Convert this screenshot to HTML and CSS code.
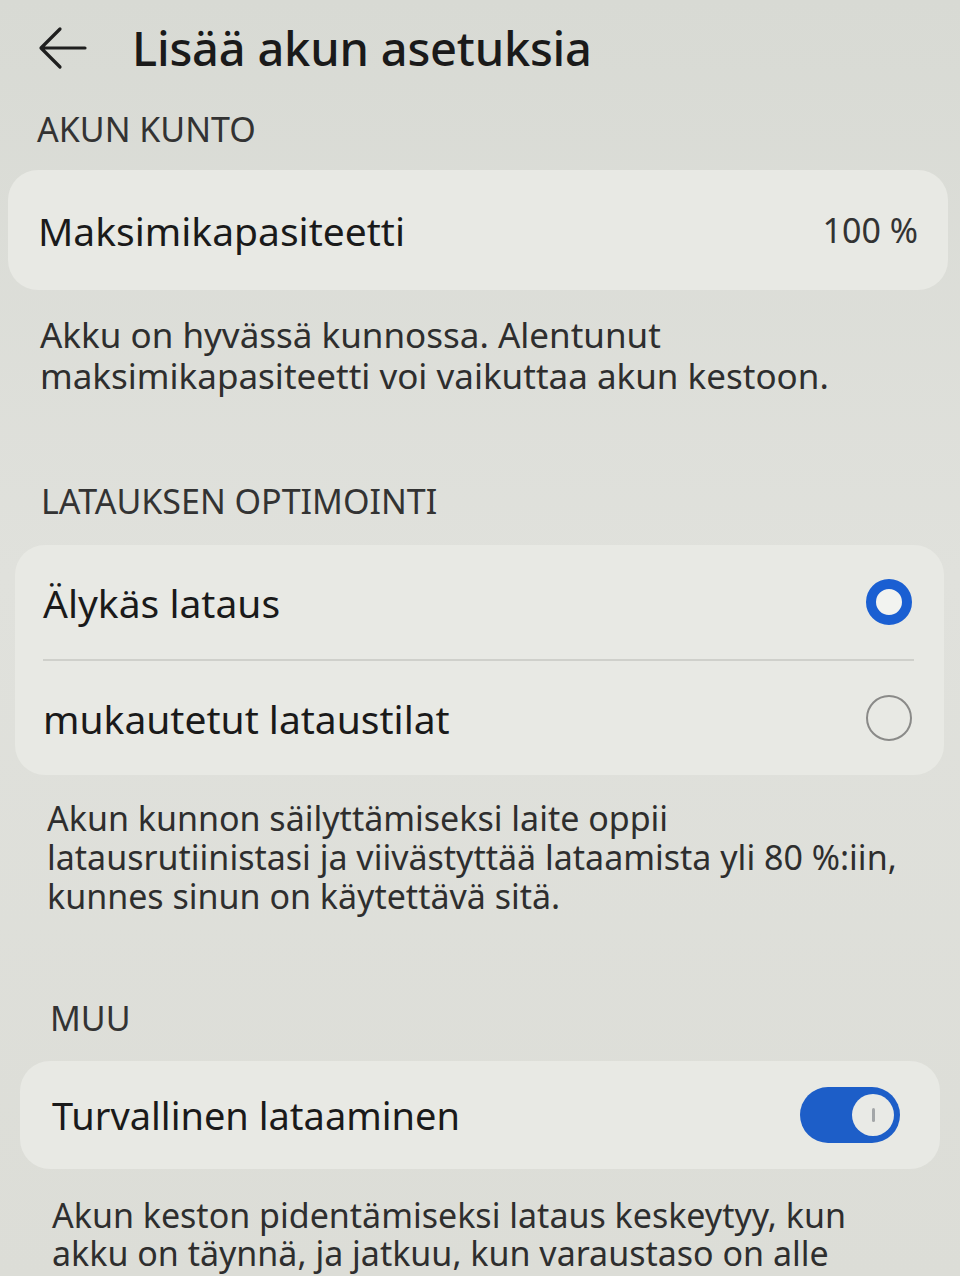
FILE: index.html
```html
<!DOCTYPE html>
<html lang="fi">
<head>
  <meta charset="UTF-8">
  <title>Lisää akun asetuksia</title>
  <link rel="stylesheet" href="styles.css">
</head>
<body>
  <div class="screen">
    <header class="topbar">
      <svg class="back" width="50" height="46" viewBox="0 0 50 46">
        <path d="M47 23 H4 M22 4 L3 23 L22 42" fill="none" stroke="#1f1f1f" stroke-width="3.2" stroke-linecap="round" stroke-linejoin="round"/>
      </svg>
      <h1>Lisää akun asetuksia</h1>
    </header>

    <!-- Akun kunto -->
    <div class="label first">AKUN KUNTO</div>
    <div class="card card-health">
      <div class="row">
        <span class="row-title">Maksimikapasiteetti</span>
        <span class="row-value">100 %</span>
      </div>
    </div>
    <p class="note note-health">Akku on hyvässä kunnossa. Alentunut<br>maksimikapasiteetti voi vaikuttaa akun kestoon.</p>

    <!-- Latauksen optimointi -->
    <div class="label second">LATAUKSEN OPTIMOINTI</div>
    <div class="card card-opt">
      <div class="row tall">
        <span class="row-title">Älykäs lataus</span>
        <span class="radio checked"></span>
      </div>
      <div class="divider"></div>
      <div class="row tall">
        <span class="row-title">mukautetut lataustilat</span>
        <span class="radio"></span>
      </div>
    </div>
    <p class="note note-opt">Akun kunnon säilyttämiseksi laite oppii<br>latausrutiinistasi ja viivästyttää lataamista yli 80 %:iin,<br>kunnes sinun on käytettävä sitä.</p>

    <!-- Muu -->
    <div class="label third">MUU</div>
    <div class="card card-other">
      <div class="row">
        <span class="row-title">Turvallinen lataaminen</span>
        <span class="switch on"><span class="knob"></span></span>
      </div>
    </div>
    <p class="note note-other">Akun keston pidentämiseksi lataus keskeytyy, kun<br>akku on täynnä, ja jatkuu, kun varaustaso on alle</p>
  </div>
</body>
</html>
```

FILE: styles.css
```css
body {
  margin: 0;
  font-family: "Noto Sans", "Liberation Sans", sans-serif;
  background: linear-gradient(180deg, #d8dad4 0%, #e0e1dc 45%, #dcddd7 100%);
  color: #1c1c1c;
  overflow: hidden;
}
.screen {
  width: 960px;
  height: 1276px;
  overflow: hidden;
}
.topbar {
  display: flex;
  align-items: center;
  height: 96px;
  padding-left: 38px;
}
.back {
  flex: none;
}
h1 {
  margin: 0 0 0 44px;
  font-size: 47px;
  font-weight: 500;
  letter-spacing: -0.2px;
  color: #1a1a1a;
}
.label {
  font-size: 34px;
  color: #333;
  line-height: 34px;
}
.label.first {
  margin: 16px 0 0 37px;
}
.label.second {
  margin: 0 0 0 41px;
}
.label.third {
  margin: 0 0 0 50px;
}
.card {
  background: #e8e9e4;
  border-radius: 30px;
}
.card-health {
  margin: 24px 12px 0 8px;
  padding: 0 30px;
}
.card-opt {
  margin: 27px 16px 0 15px;
  padding: 0 30px 0 28px;
}
.card-other {
  margin: 26px 20px 0 20px;
  padding: 0 40px 0 32px;
}
.row {
  display: flex;
  align-items: center;
  justify-content: space-between;
  height: 120px;
}
.row.tall {
  height: 114px;
}
.card-other .row {
  height: 108px;
}
.row-title {
  font-size: 39px;
  color: #1a1a1a;
}
.card-other .row-title {
  font-size: 38px;
}
.row-value {
  font-size: 34px;
  color: #333;
}
.divider {
  height: 2px;
  background: #cfd0cb;
}
.radio {
  width: 46px;
  height: 46px;
  box-sizing: border-box;
  border-radius: 50%;
  border: 2px solid #8a8a88;
  margin-right: 2px;
}
.radio.checked {
  border: 10px solid #1a5fd2;
  background: #f2f3f0;
}
.switch {
  display: flex;
  align-items: center;
  justify-content: flex-end;
  width: 100px;
  height: 56px;
  box-sizing: border-box;
  padding: 0 6px;
  border-radius: 28px;
  background: #1d5ec8;
}
.knob {
  display: flex;
  align-items: center;
  justify-content: center;
  width: 42px;
  height: 42px;
  border-radius: 50%;
  background: #e9eae6;
}
.knob::after {
  content: "";
  width: 3px;
  height: 14px;
  border-radius: 2px;
  background: #a3a6a8;
}
.note {
  font-size: 34px;
  color: #2e2e2e;
  margin: 0;
  white-space: nowrap;
}
.note-health {
  font-size: 35px;
  line-height: 41px;
  padding: 24px 0 0 40px;
  height: 170px;
}
.note-opt {
  line-height: 39px;
  padding: 24px 0 0 47px;
  height: 202px;
}
.note-other {
  line-height: 38px;
  padding: 27px 0 0 52px;
}
```
